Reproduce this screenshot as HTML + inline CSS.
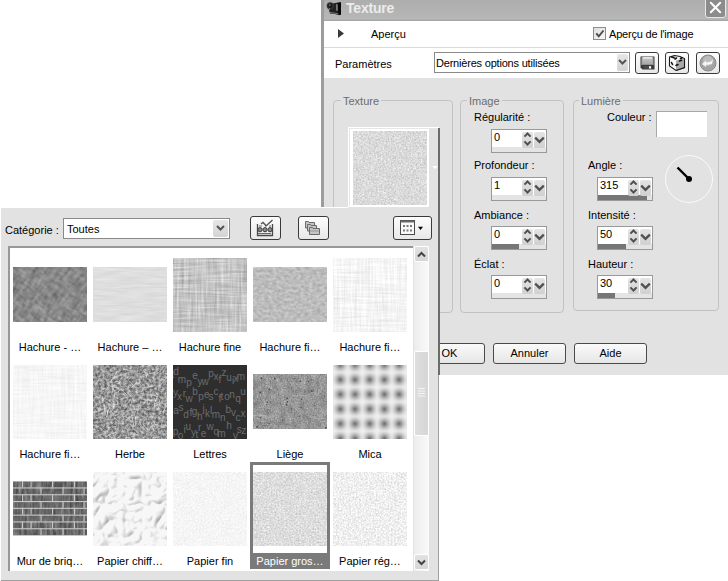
<!DOCTYPE html>
<html><head><meta charset="utf-8">
<style>
*{margin:0;padding:0;box-sizing:border-box}
html,body{width:728px;height:581px;overflow:hidden;background:#fff;font-family:"Liberation Sans",sans-serif;font-size:11px;color:#000}
.a{position:absolute}
svg.a{overflow:visible}
.t{position:absolute;white-space:nowrap;line-height:13px;font-size:11px}
.grp{position:absolute;border:1px solid #c2c2c2;border-radius:4px}
.gl{position:absolute;background:#e2e2e2;color:#6c6c6c;padding:0 2px;line-height:13px;white-space:nowrap}
.spin{position:absolute;width:56px;height:24px;border:1px solid #999;background:#fff}
.spin .trk{position:absolute;left:0;right:0;bottom:0;height:5px;background:#e4e4e4}
.spin .fill{position:absolute;left:0;bottom:0;height:5px;background:#767676}
.spin .v{position:absolute;left:2px;top:1px;line-height:13px;font-size:11px}
.sb{position:absolute;top:2px;width:11px;height:16px;background:linear-gradient(#e4e4e4,#d0d0d0);border-radius:2px}
.btn{position:absolute;border:1px solid #3a3a3a;border-radius:3px;background:linear-gradient(#fdfdfd,#e8e8e8)}
.pbtn{position:absolute;width:73px;height:21px;border:1px solid #4a4a4a;border-radius:3px;background:linear-gradient(#fafafa,#e6e6e6);text-align:center;line-height:19px}
.lb{position:absolute;width:80px;text-align:center;white-space:nowrap;line-height:13px}
.th{position:absolute;display:block}
</style></head><body>
<svg width="0" height="0" style="position:absolute">
<defs>
 <filter id="fPrev" x="0" y="0" width="1" height="1" color-interpolation-filters="sRGB">
  <feTurbulence type="fractalNoise" baseFrequency="0.6" numOctaves="2" seed="4" result="a"/><feTurbulence type="fractalNoise" baseFrequency="0.12" numOctaves="2" seed="44" result="b"/><feComposite in="a" in2="b" operator="arithmetic" k2="0.85" k3="0.15"/>
  <feColorMatrix type="matrix" values="0.341 0 0 0 0.684  0.341 0 0 0 0.684  0.341 0 0 0 0.684  0 0 0 0 1"/>
 </filter>
 <filter id="fH1" x="0" y="0" width="1" height="1" color-interpolation-filters="sRGB">
  <feTurbulence type="fractalNoise" baseFrequency="0.1 0.3" numOctaves="2" seed="7" result="a"/>
  <feTurbulence type="fractalNoise" baseFrequency="0.3 0.1" numOctaves="2" seed="9" result="b"/>
  <feComposite in="a" in2="b" operator="arithmetic" k2="0.5" k3="0.5"/>
  <feColorMatrix type="matrix" values="0.488 0 0 0 0.289  0.488 0 0 0 0.289  0.488 0 0 0 0.289  0 0 0 0 1"/>
 </filter>
 <filter id="fH2" x="0" y="0" width="1" height="1" color-interpolation-filters="sRGB">
  <feTurbulence type="fractalNoise" baseFrequency="0.04 0.5" numOctaves="2" seed="3"/>
  <feColorMatrix type="matrix" values="0.103 0 0 0 0.819  0.103 0 0 0 0.819  0.103 0 0 0 0.819  0 0 0 0 1"/>
 </filter>
 <filter id="fHF" x="0" y="0" width="1" height="1" color-interpolation-filters="sRGB">
  <feTurbulence type="fractalNoise" baseFrequency="0.03 0.45" numOctaves="2" seed="11" result="a"/>
  <feTurbulence type="fractalNoise" baseFrequency="0.45 0.03" numOctaves="2" seed="12" result="b"/>
  <feComposite in="a" in2="b" operator="arithmetic" k2="0.5" k3="0.5"/>
  <feColorMatrix type="matrix" values="0.488 0 0 0 0.525  0.488 0 0 0 0.525  0.488 0 0 0 0.525  0 0 0 0 1"/>
 </filter>
 <filter id="fH4" x="0" y="0" width="1" height="1" color-interpolation-filters="sRGB">
  <feTurbulence type="fractalNoise" baseFrequency="0.25 0.35" numOctaves="2" seed="5"/>
  <feColorMatrix type="matrix" values="0.241 0 0 0 0.617  0.241 0 0 0 0.617  0.241 0 0 0 0.617  0 0 0 0 1"/>
 </filter>
 <filter id="fH5" x="0" y="0" width="1" height="1" color-interpolation-filters="sRGB">
  <feTurbulence type="fractalNoise" baseFrequency="0.03 0.45" numOctaves="2" seed="21" result="a"/>
  <feTurbulence type="fractalNoise" baseFrequency="0.45 0.03" numOctaves="2" seed="22" result="b"/>
  <feComposite in="a" in2="b" operator="arithmetic" k2="0.5" k3="0.5"/>
  <feColorMatrix type="matrix" values="0.244 0 0 0 0.835  0.244 0 0 0 0.835  0.244 0 0 0 0.835  0 0 0 0 1"/>
 </filter>
 <filter id="fH6" x="0" y="0" width="1" height="1" color-interpolation-filters="sRGB">
  <feTurbulence type="fractalNoise" baseFrequency="0.03 0.45" numOctaves="2" seed="31" result="a"/>
  <feTurbulence type="fractalNoise" baseFrequency="0.45 0.03" numOctaves="2" seed="32" result="b"/>
  <feComposite in="a" in2="b" operator="arithmetic" k2="0.5" k3="0.5"/>
  <feColorMatrix type="matrix" values="0.146 0 0 0 0.892  0.146 0 0 0 0.892  0.146 0 0 0 0.892  0 0 0 0 1"/>
 </filter>
 <filter id="fHerbe" x="0" y="0" width="1" height="1" color-interpolation-filters="sRGB">
  <feTurbulence type="fractalNoise" baseFrequency="0.35" numOctaves="3" seed="8"/>
  <feColorMatrix type="matrix" values="0.759 0 0 0 0.201  0.759 0 0 0 0.201  0.759 0 0 0 0.201  0 0 0 0 1"/>
 </filter>
 <filter id="fLiege" x="0" y="0" width="1" height="1" color-interpolation-filters="sRGB">
  <feTurbulence type="fractalNoise" baseFrequency="0.7" numOctaves="2" seed="13" result="a"/><feTurbulence type="fractalNoise" baseFrequency="0.15" numOctaves="2" seed="53" result="b"/><feComposite in="a" in2="b" operator="arithmetic" k2="0.6" k3="0.4"/>
  <feColorMatrix type="matrix" values="0.537 0 0 0 0.320  0.537 0 0 0 0.320  0.537 0 0 0 0.320  0 0 0 0 1"/>
 </filter>
 <filter id="fPfin" x="0" y="0" width="1" height="1" color-interpolation-filters="sRGB">
  <feTurbulence type="fractalNoise" baseFrequency="0.6" numOctaves="2" seed="14" result="a"/><feTurbulence type="fractalNoise" baseFrequency="0.12" numOctaves="2" seed="54" result="b"/><feComposite in="a" in2="b" operator="arithmetic" k2="0.85" k3="0.15"/>
  <feColorMatrix type="matrix" values="0.156 0 0 0 0.883  0.156 0 0 0 0.883  0.156 0 0 0 0.883  0 0 0 0 1"/>
 </filter>
 <filter id="fPgros" x="0" y="0" width="1" height="1" color-interpolation-filters="sRGB">
  <feTurbulence type="fractalNoise" baseFrequency="0.6" numOctaves="2" seed="15" result="a"/><feTurbulence type="fractalNoise" baseFrequency="0.12" numOctaves="2" seed="55" result="b"/><feComposite in="a" in2="b" operator="arithmetic" k2="0.85" k3="0.15"/>
  <feColorMatrix type="matrix" values="0.341 0 0 0 0.696  0.341 0 0 0 0.696  0.341 0 0 0 0.696  0 0 0 0 1"/>
 </filter>
 <filter id="fPreg" x="0" y="0" width="1" height="1" color-interpolation-filters="sRGB">
  <feTurbulence type="fractalNoise" baseFrequency="0.6" numOctaves="2" seed="16" result="a"/><feTurbulence type="fractalNoise" baseFrequency="0.12" numOctaves="2" seed="56" result="b"/><feComposite in="a" in2="b" operator="arithmetic" k2="0.85" k3="0.15"/>
  <feColorMatrix type="matrix" values="0.341 0 0 0 0.767  0.341 0 0 0 0.767  0.341 0 0 0 0.767  0 0 0 0 1"/>
 </filter>
 <filter id="fBrick" x="0" y="0" width="1" height="1" color-interpolation-filters="sRGB">
  <feTurbulence type="fractalNoise" baseFrequency="0.35 0.08" numOctaves="2" seed="17"/>
  <feColorMatrix type="matrix" values="0.414 0 0 0 0.201  0.414 0 0 0 0.201  0.414 0 0 0 0.201  0 0 0 0 1"/>
 </filter>
 <radialGradient id="gMica">
  <stop offset="0" stop-color="#5a5a5a"/><stop offset="0.5" stop-color="#a4a4a4"/><stop offset="1" stop-color="#eeeeee"/>
 </radialGradient>
 <pattern id="pMica" x="-0.35" y="-7.35" width="14.7" height="14.7" patternUnits="userSpaceOnUse">
  <rect width="14.7" height="14.7" fill="#eeeeee"/>
  <circle cx="7.35" cy="7.35" r="7.35" fill="url(#gMica)"/>
 </pattern>
</defs>
</svg>

<!-- ============ DIALOG ============ -->
<div class="a" style="left:321px;top:0;width:407px;height:375px;background:#e2e2e2"></div>
<div class="a" style="left:321px;top:0;width:3px;height:375px;background:#9c9c9c"></div>
<div class="a" style="left:324px;top:0;width:404px;height:21px;background:linear-gradient(#adadad,#b7b7b7 92%,#a5a5a5 95%,#a5a5a5)"></div>
<svg class="a" style="left:326px;top:1px" width="16" height="15" viewBox="0 0 16 15">
 <path d="M2 4L9 2L15 1.2L15 13.5L13 14.2L9 13L4 12.5L3 9Z" fill="#222"/>
 <path d="M11 2L15 1.2L15 13.5L12.5 14Z" fill="#080808"/>
 <circle cx="4.3" cy="4.8" r="3.6" fill="#333"/><circle cx="4.3" cy="4.8" r="2.2" fill="#1a1a1a"/><circle cx="3.8" cy="4.2" r="0.9" fill="#6a6a6a"/>
 <rect x="10.3" y="3.2" width="1.3" height="6.5" fill="#a0a0a0"/>
 <path d="M4 11.5L9 12.2L12.5 13" stroke="#7a7a7a" stroke-width="0.9" fill="none"/>
 <path d="M2.5 8.5L4 7.5" stroke="#bbb" stroke-width="0.8"/>
</svg>
<div class="t" style="left:346px;top:1px;font-size:14px;font-weight:bold;color:#ebebeb;line-height:15px;letter-spacing:-0.2px">Texture</div>
<div class="a" style="left:705px;top:-3px;width:21px;height:21px;border:1px solid #e8e8e8;border-radius:3px;background:#8c8c8c"></div>
<svg class="a" style="left:709px;top:1px" width="13" height="13" viewBox="0 0 13 13"><path d="M1.8 1.8L11.2 11.2M11.2 1.8L1.8 11.2" stroke="#fff" stroke-width="2" stroke-linecap="round"/></svg>
<div class="a" style="left:726px;top:0;width:1px;height:19px;background:#bcbcbc"></div>

<div class="a" style="left:324px;top:21px;width:404px;height:57px;background:#fff"></div>
<div class="a" style="left:324px;top:47px;width:404px;height:1px;background:#dadada"></div>
<svg class="a" style="left:338px;top:29px" width="6" height="10"><path d="M0 0L6 4.5L0 9Z" fill="#3a3a3a"/></svg>
<div class="t" style="left:371px;top:27.5px">Aperçu</div>
<div class="a" style="left:593px;top:27px;width:13px;height:13px;border:1px solid #8c8c8c;background:linear-gradient(135deg,#dedede,#f8f8f8)"></div>
<svg class="a" style="left:595px;top:29px" width="10" height="10"><path d="M1.3 4.3L3.8 7.3L8.5 1.5" fill="none" stroke="#4a4a4a" stroke-width="1.9"/></svg>
<div class="t" style="left:609px;top:27.5px;letter-spacing:-0.2px">Aperçu de l'image</div>

<div class="t" style="left:335px;top:57.5px">Paramètres</div>
<div class="a" style="left:434px;top:52px;width:196px;height:21px;border:1px solid #8a8a8a;background:#fff"></div>
<div class="t" style="left:436px;top:57px;letter-spacing:-0.2px">Dernières options utilisées</div>
<div class="a" style="left:617px;top:54px;width:11px;height:17px;background:linear-gradient(#e6e6e6,#d4d4d4);border-radius:2px"></div>
<svg class="a" style="left:618px;top:59px" width="9" height="7"><path d="M1 1L4.5 4.5L8 1" fill="none" stroke="#555" stroke-width="2"/></svg>
<div class="btn" style="left:635px;top:52px;width:24px;height:22px"></div>
<svg class="a" style="left:640px;top:56px" width="15" height="14" viewBox="0 0 15 14">
 <defs><linearGradient id="gFl" x1="0" y1="0" x2="0" y2="1"><stop offset="0" stop-color="#c8c8c8"/><stop offset="1" stop-color="#a4a4a4"/></linearGradient></defs>
 <path d="M0.5 0.5H14.5V13.5H2.5L0.5 11.5Z" fill="#383838"/>
 <rect x="2" y="1.2" width="11" height="7.6" fill="url(#gFl)"/>
 <rect x="3" y="1.2" width="9" height="1.3" fill="#f6f6f6"/>
 <rect x="1.4" y="1.2" width="0.8" height="8" fill="#9a9a9a"/><rect x="12.8" y="1.2" width="0.8" height="8" fill="#9a9a9a"/>
 <rect x="3.5" y="9.8" width="8.5" height="3" fill="#4a4a4a"/>
 <rect x="9" y="10.2" width="2" height="2.3" fill="#fff"/>
</svg>
<div class="btn" style="left:665px;top:52px;width:24px;height:22px"></div>
<svg class="a" style="left:668px;top:54px" width="18" height="18" viewBox="0 0 18 18">
 <path d="M1.5 3L6.5 1.5L12 2.5L16.5 4.5L16.5 13.5L8 16.5L1.5 12Z" fill="#f8f8f8" stroke="#1a1a1a" stroke-width="1.1"/>
 <path d="M8 6.5L16.5 4.5L16.5 13.5L8 16.5Z" fill="#a8a8a8"/>
 <path d="M8 16.5L16.5 13.5L16.5 4.5" fill="none" stroke="#1a1a1a" stroke-width="1.1"/>
 <path d="M3.5 3L6 3.6M7 5L8.5 4M12.5 4.5L14.2 3.8M11.5 7L13.5 6.3M8 11.5L10 10.5M3.5 8.5L4.5 10.5" stroke="#111" stroke-width="1.6" stroke-linecap="round"/>
</svg>
<div class="btn" style="left:696px;top:52px;width:24px;height:22px"></div>
<svg class="a" style="left:699px;top:54px" width="18" height="18" viewBox="0 0 18 18">
 <circle cx="9" cy="9" r="8" fill="#a4a4a4" stroke="#8a8a8a" stroke-width="1"/>
 <circle cx="9" cy="7" r="5" fill="#bcbcbc"/>
 <path d="M3 10L7 6.5L7 8.5L12 7.5L14 5L13 10L7 11L7 13Z" fill="#f6f6f6"/>
</svg>

<div class="grp" style="left:333px;top:100px;width:120px;height:213px"></div>
<div class="gl" style="left:341px;top:95px">Texture</div>
<div class="grp" style="left:460px;top:100px;width:104px;height:213px"></div>
<div class="gl" style="left:467px;top:95px">Image</div>
<div class="grp" style="left:573px;top:100px;width:146px;height:211px"></div>
<div class="gl" style="left:579px;top:95px">Lumière</div>

<div class="a" style="left:348px;top:127px;width:81px;height:80px;background:#fff"></div>
<div class="a" style="left:348px;top:127px;width:91px;height:2px;background:#fff"></div>
<div class="a" style="left:349px;top:128px;width:89px;height:1px;background:#e6e6e6"></div><div class="a" style="left:349px;top:128px;width:1px;height:78px;background:#e6e6e6"></div>
<svg class="th" style="left:353px;top:131px" width="74" height="74"><rect width="74" height="74" filter="url(#fPrev)"/></svg>
<svg class="a" style="left:432px;top:166px" width="6" height="4"><path d="M0 0H6L3 3Z" fill="#fff"/></svg>

<div class="t" style="left:474px;top:111px">Régularité :</div>
<div class="spin" style="left:491px;top:129px"><div class="trk"></div><div class="v">0</div><div class="sb" style="left:30px"></div><div class="sb" style="left:42px"></div><svg class="a" style="left:0;top:0" width="54" height="22"><path d="M32.4 6.6L35.5 3.5L38.6 6.6M32.4 11.4L35.5 14.5L38.6 11.4" fill="none" stroke="#505050" stroke-width="2"/><path d="M43.2 7.6L47.5 11.9L51.8 7.6" fill="none" stroke="#505050" stroke-width="2.3"/></svg></div>
<div class="t" style="left:474px;top:158.5px">Profondeur :</div>
<div class="spin" style="left:491px;top:177px"><div class="trk"></div><div class="v">1</div><div class="sb" style="left:30px"></div><div class="sb" style="left:42px"></div><svg class="a" style="left:0;top:0" width="54" height="22"><path d="M32.4 6.6L35.5 3.5L38.6 6.6M32.4 11.4L35.5 14.5L38.6 11.4" fill="none" stroke="#505050" stroke-width="2"/><path d="M43.2 7.6L47.5 11.9L51.8 7.6" fill="none" stroke="#505050" stroke-width="2.3"/></svg></div>
<div class="t" style="left:474px;top:208.5px">Ambiance :</div>
<div class="spin" style="left:491px;top:226px"><div class="trk"></div><div class="fill" style="width:27px"></div><div class="v">0</div><div class="sb" style="left:30px"></div><div class="sb" style="left:42px"></div><svg class="a" style="left:0;top:0" width="54" height="22"><path d="M32.4 6.6L35.5 3.5L38.6 6.6M32.4 11.4L35.5 14.5L38.6 11.4" fill="none" stroke="#505050" stroke-width="2"/><path d="M43.2 7.6L47.5 11.9L51.8 7.6" fill="none" stroke="#505050" stroke-width="2.3"/></svg></div>
<div class="t" style="left:474px;top:257.5px">Éclat :</div>
<div class="spin" style="left:491px;top:275px"><div class="trk"></div><div class="v">0</div><div class="sb" style="left:30px"></div><div class="sb" style="left:42px"></div><svg class="a" style="left:0;top:0" width="54" height="22"><path d="M32.4 6.6L35.5 3.5L38.6 6.6M32.4 11.4L35.5 14.5L38.6 11.4" fill="none" stroke="#505050" stroke-width="2"/><path d="M43.2 7.6L47.5 11.9L51.8 7.6" fill="none" stroke="#505050" stroke-width="2.3"/></svg></div>

<div class="t" style="left:607px;top:111px">Couleur :</div>
<div class="a" style="left:656px;top:111px;width:51px;height:26px;background:#fff;border-top:1px solid #a8a8a8;border-left:1px solid #a8a8a8"></div>
<div class="t" style="left:588px;top:158.5px">Angle :</div>
<div class="spin" style="left:597px;top:177px"><div class="trk"></div><div class="fill" style="width:49px"></div><div class="v">315</div><div class="sb" style="left:30px"></div><div class="sb" style="left:42px"></div><svg class="a" style="left:0;top:0" width="54" height="22"><path d="M32.4 6.6L35.5 3.5L38.6 6.6M32.4 11.4L35.5 14.5L38.6 11.4" fill="none" stroke="#505050" stroke-width="2"/><path d="M43.2 7.6L47.5 11.9L51.8 7.6" fill="none" stroke="#505050" stroke-width="2.3"/></svg></div>
<div class="t" style="left:588px;top:208.5px">Intensité :</div>
<div class="spin" style="left:597px;top:226px"><div class="trk"></div><div class="fill" style="width:28px"></div><div class="v">50</div><div class="sb" style="left:30px"></div><div class="sb" style="left:42px"></div><svg class="a" style="left:0;top:0" width="54" height="22"><path d="M32.4 6.6L35.5 3.5L38.6 6.6M32.4 11.4L35.5 14.5L38.6 11.4" fill="none" stroke="#505050" stroke-width="2"/><path d="M43.2 7.6L47.5 11.9L51.8 7.6" fill="none" stroke="#505050" stroke-width="2.3"/></svg></div>
<div class="t" style="left:588px;top:257.5px">Hauteur :</div>
<div class="spin" style="left:597px;top:275px"><div class="trk"></div><div class="fill" style="width:17px"></div><div class="v">30</div><div class="sb" style="left:30px"></div><div class="sb" style="left:42px"></div><svg class="a" style="left:0;top:0" width="54" height="22"><path d="M32.4 6.6L35.5 3.5L38.6 6.6M32.4 11.4L35.5 14.5L38.6 11.4" fill="none" stroke="#505050" stroke-width="2"/><path d="M43.2 7.6L47.5 11.9L51.8 7.6" fill="none" stroke="#505050" stroke-width="2.3"/></svg></div>
<svg class="a" style="left:664px;top:154px" width="50" height="50"><circle cx="25" cy="25" r="23.5" fill="none" stroke="#fafafa" stroke-width="1"/><path d="M13.5 13.5L25 25" stroke="#000" stroke-width="2.4"/><circle cx="25" cy="25" r="3" fill="#000"/></svg>

<div class="pbtn" style="left:412px;top:343px;padding-left:2px">OK</div>
<div class="pbtn" style="left:493px;top:343px">Annuler</div>
<div class="pbtn" style="left:574px;top:343px">Aide</div>

<!-- ============ PICKER ============ -->
<div class="a" style="left:1px;top:207px;width:438px;height:374px;background:#e2e2e2;border-right:1px solid #a0a0a0;border-bottom:1px solid #a0a0a0"></div>
<div class="a" style="left:1px;top:207px;width:347px;height:1px;background:#fff"></div>
<div class="a" style="left:438px;top:128px;width:2px;height:247px;background:#6c6c6c"></div>
<div class="t" style="left:5px;top:223.5px">Catégorie :</div>
<div class="a" style="left:63px;top:218px;width:167px;height:21px;border:1px solid #8a8a8a;background:#fff"></div>
<div class="t" style="left:67px;top:223px">Toutes</div>
<div class="a" style="left:213px;top:220px;width:15px;height:17px;background:linear-gradient(#e6e6e6,#d4d4d4);border-radius:2px"></div>
<svg class="a" style="left:216px;top:225px" width="9" height="7"><path d="M1 1L4.5 4.5L8 1" fill="none" stroke="#555" stroke-width="2"/></svg>
<div class="btn" style="left:250px;top:216px;width:31px;height:24px"></div>
<svg class="a" style="left:256px;top:219px" width="18" height="18" viewBox="0 0 18 18">
 <path d="M1.5 5V16.5H16.5V5" fill="none" stroke="#4a4a4a" stroke-width="1.3"/>
 <path d="M3 7H6M13 7H15" stroke="#6a6a6a" stroke-width="1"/>
 <path d="M2 14.5H15" stroke="#6a6a6a" stroke-width="1"/>
 <circle cx="4" cy="10.7" r="2.1" fill="#8a8a8a" stroke="#3a3a3a" stroke-width="1"/>
 <circle cx="9" cy="10.7" r="2.1" fill="#8a8a8a" stroke="#3a3a3a" stroke-width="1"/>
 <circle cx="14" cy="10.7" r="2.1" fill="#8a8a8a" stroke="#3a3a3a" stroke-width="1"/>
 <path d="M5 5L7 3.5L9 5.5L10 7L16.5 1" fill="none" stroke="#555" stroke-width="1.4"/>
</svg>
<div class="btn" style="left:298px;top:216px;width:31px;height:24px"></div>
<svg class="a" style="left:304px;top:219px" width="18" height="18" viewBox="0 0 18 18">
 <g fill="#c4c4c4" stroke="#6a6a6a" stroke-width="1">
 <path d="M1.5 2.5H4.5L5 3.5H10.5V9H1.5Z"/>
 <path d="M3.5 5.5H6.5L7 6.5H12.5V12H3.5Z"/>
 <path d="M5.5 8.5H8.5L9 9.5H15.5V15.5H5.5Z"/>
 </g>
 <path d="M6 12H15" stroke="#999" stroke-width="1"/>
</svg>
<div class="btn" style="left:393px;top:216px;width:39px;height:24px"></div>
<svg class="a" style="left:400px;top:220px" width="24" height="16" viewBox="0 0 24 16">
 <rect x="0.5" y="0.5" width="14" height="14" fill="#fafafa" stroke="#4a4a4a" stroke-width="1"/>
 <rect x="0.5" y="0.5" width="14" height="2" fill="#6a6a6a"/>
 <g fill="#7a7a7a"><rect x="3" y="5" width="2" height="2"/><rect x="6.5" y="5" width="2" height="2"/><rect x="10" y="5" width="2" height="2"/><rect x="3" y="9.5" width="2" height="2"/><rect x="6.5" y="9.5" width="2" height="2"/><rect x="10" y="9.5" width="2" height="2"/></g>
 <path d="M18 6.8H23L20.5 10Z" fill="#000"/>
</svg>

<div class="a" style="left:8px;top:246px;width:405px;height:325px;background:#fff;border-top:2px solid #989898;border-left:2px solid #989898"></div>
<div class="a" style="left:414px;top:246px;width:15px;height:325px;background:linear-gradient(90deg,#ececec,#fafafa)"></div>
<div class="a" style="left:414px;top:246px;width:15px;height:16px;background:linear-gradient(#e2e2e2,#d6d6d6);border:1px solid #fff;border-radius:2px"></div>
<svg class="a" style="left:417px;top:251px" width="9" height="7"><path d="M1 5.5L4.5 2L8 5.5" fill="none" stroke="#444" stroke-width="2"/></svg>
<div class="a" style="left:414px;top:351px;width:15px;height:85px;background:linear-gradient(90deg,#dedede,#d6d6d6);border:1px solid #fff;border-radius:2px"></div>
<svg class="a" style="left:418px;top:388px" width="7" height="9"><path d="M0 0.5H7M0 3H7M0 5.5H7M0 8H7" stroke="#f4f4f4" stroke-width="1"/></svg>
<div class="a" style="left:414px;top:554px;width:15px;height:16px;background:linear-gradient(#e2e2e2,#d6d6d6);border:1px solid #fff;border-radius:2px"></div>
<svg class="a" style="left:417px;top:559px" width="9" height="7"><path d="M1 1.5L4.5 5L8 1.5" fill="none" stroke="#444" stroke-width="2"/></svg>

<!-- row1 -->
<svg class="th" style="left:13px;top:267px" width="74" height="55"><g transform="rotate(35 37 27)"><rect x="-30" y="-30" width="134" height="115" filter="url(#fH1)"/></g></svg>
<svg class="th" style="left:93px;top:267px" width="74" height="55"><rect width="74" height="55" filter="url(#fH2)"/></svg>
<svg class="th" style="left:173px;top:258px" width="74" height="74"><rect width="74" height="74" filter="url(#fHF)"/></svg>
<svg class="th" style="left:253px;top:267px" width="74" height="55"><rect width="74" height="55" filter="url(#fH4)"/></svg>
<svg class="th" style="left:333px;top:258px" width="74" height="74"><rect width="74" height="74" filter="url(#fH5)"/></svg>
<div class="lb" style="left:10px;top:341px">Hachure - …</div>
<div class="lb" style="left:90px;top:341px">Hachure – …</div>
<div class="lb" style="left:170px;top:341px">Hachure fine</div>
<div class="lb" style="left:250px;top:341px">Hachure fi…</div>
<div class="lb" style="left:330px;top:341px">Hachure fi…</div>
<!-- row2 -->
<svg class="th" style="left:13px;top:365px" width="74" height="74"><rect width="74" height="74" filter="url(#fH6)"/></svg>
<svg class="th" style="left:93px;top:365px" width="74" height="74"><rect width="74" height="74" filter="url(#fHerbe)"/><g fill="none" stroke-width="0.9" opacity="0.7"><path d="M46.1 54.9Q42.6 60.3 42.9 66.0" stroke="#606060"/><path d="M69.8 48.0Q69.3 49.0 65.8 50.9" stroke="#505050"/><path d="M7.5 18.5Q9.6 23.1 8.4 25.7" stroke="#c8c8c8"/><path d="M11.8 59.0Q7.5 57.5 6.1 52.1" stroke="#c8c8c8"/><path d="M0.4 57.2Q-3.0 59.8 -4.8 58.6" stroke="#c8c8c8"/><path d="M39.9 50.2Q40.2 46.2 36.7 39.1" stroke="#c8c8c8"/><path d="M22.1 26.7Q20.1 25.8 19.5 22.3" stroke="#d8d8d8"/><path d="M43.4 44.1Q45.2 46.2 44.6 48.5" stroke="#e6e6e6"/><path d="M23.4 35.6Q25.8 37.2 24.6 39.9" stroke="#d8d8d8"/><path d="M29.9 40.6Q32.8 39.8 36.0 37.2" stroke="#d8d8d8"/><path d="M46.2 70.6Q43.3 68.0 41.8 66.6" stroke="#505050"/><path d="M38.8 57.4Q36.4 52.4 31.1 51.1" stroke="#e6e6e6"/><path d="M70.0 6.7Q71.7 4.7 74.8 -0.7" stroke="#c8c8c8"/><path d="M40.3 23.1Q42.0 21.5 42.5 18.2" stroke="#d8d8d8"/><path d="M22.9 35.8Q23.5 37.7 23.8 40.4" stroke="#606060"/><path d="M17.6 44.0Q14.4 49.3 14.0 50.7" stroke="#505050"/><path d="M47.2 59.3Q50.5 57.4 50.1 54.4" stroke="#606060"/><path d="M58.3 7.9Q59.9 6.7 63.1 5.8" stroke="#505050"/><path d="M73.9 63.1Q70.9 62.9 66.4 64.2" stroke="#505050"/><path d="M20.3 34.8Q20.1 36.7 16.3 37.6" stroke="#606060"/><path d="M36.9 25.0Q35.8 22.9 31.7 21.8" stroke="#606060"/><path d="M58.2 57.3Q59.2 62.5 61.3 66.1" stroke="#e6e6e6"/><path d="M20.8 35.9Q22.0 40.0 19.6 45.4" stroke="#e6e6e6"/><path d="M13.2 63.0Q18.9 62.1 23.3 61.4" stroke="#e6e6e6"/><path d="M60.4 47.9Q60.4 52.5 58.4 54.4" stroke="#e6e6e6"/><path d="M25.9 62.4Q24.5 65.9 19.4 69.3" stroke="#e6e6e6"/><path d="M39.2 12.3Q35.3 15.5 33.2 22.1" stroke="#505050"/><path d="M49.6 30.8Q54.6 34.4 58.2 38.5" stroke="#606060"/><path d="M46.2 57.3Q48.1 61.4 52.5 64.7" stroke="#d8d8d8"/><path d="M46.2 13.4Q48.0 18.0 45.9 18.8" stroke="#d8d8d8"/><path d="M12.3 66.0Q6.5 60.4 3.3 58.5" stroke="#505050"/><path d="M34.4 28.1Q38.6 30.5 41.1 33.8" stroke="#c8c8c8"/><path d="M25.9 70.5Q22.1 72.9 19.2 79.1" stroke="#606060"/><path d="M45.4 7.0Q47.8 7.4 51.8 8.9" stroke="#606060"/><path d="M9.6 30.3Q11.9 32.3 17.2 33.5" stroke="#505050"/><path d="M41.7 70.8Q38.7 72.4 33.0 72.6" stroke="#e6e6e6"/><path d="M28.3 24.1Q25.2 27.8 21.1 28.3" stroke="#e6e6e6"/><path d="M27.8 31.9Q26.9 30.2 26.9 25.7" stroke="#505050"/><path d="M11.8 44.0Q11.6 46.4 12.1 50.3" stroke="#e6e6e6"/><path d="M72.8 36.4Q74.4 34.4 74.6 28.8" stroke="#d8d8d8"/><path d="M18.2 3.0Q16.0 -0.6 13.5 -2.4" stroke="#505050"/><path d="M69.2 57.9Q70.0 53.9 69.0 51.7" stroke="#c8c8c8"/><path d="M36.4 73.4Q39.9 72.6 47.3 74.7" stroke="#d8d8d8"/><path d="M20.9 52.4Q24.5 55.1 28.3 58.8" stroke="#d8d8d8"/><path d="M55.1 43.7Q52.9 41.5 49.3 42.4" stroke="#505050"/><path d="M50.9 14.1Q55.9 12.7 60.3 9.7" stroke="#606060"/><path d="M46.8 35.7Q44.5 38.4 40.8 39.4" stroke="#505050"/><path d="M66.5 34.4Q67.1 37.4 66.2 40.8" stroke="#d8d8d8"/><path d="M21.2 57.8Q19.8 60.7 16.8 60.5" stroke="#505050"/><path d="M72.0 39.8Q74.0 36.8 79.4 36.1" stroke="#d8d8d8"/><path d="M60.6 58.6Q63.7 62.4 62.8 62.2" stroke="#505050"/><path d="M51.9 3.6Q51.2 4.6 48.7 8.4" stroke="#d8d8d8"/><path d="M21.6 67.9Q20.2 62.6 16.4 60.8" stroke="#505050"/><path d="M15.8 41.1Q16.7 45.6 21.1 49.5" stroke="#e6e6e6"/><path d="M54.9 65.0Q53.2 62.2 50.0 59.4" stroke="#e6e6e6"/><path d="M26.2 48.6Q22.6 50.4 21.8 51.2" stroke="#e6e6e6"/><path d="M37.4 67.4Q39.9 67.8 45.9 70.4" stroke="#e6e6e6"/><path d="M61.6 21.0Q56.3 21.3 51.3 22.6" stroke="#e6e6e6"/><path d="M9.7 1.4Q10.4 -3.7 14.4 -5.8" stroke="#d8d8d8"/><path d="M44.0 17.7Q39.6 20.5 38.3 23.1" stroke="#e6e6e6"/><path d="M40.1 28.5Q37.5 32.1 33.4 37.9" stroke="#505050"/><path d="M8.6 72.0Q12.1 76.0 14.0 81.1" stroke="#c8c8c8"/><path d="M61.9 21.4Q57.0 24.4 53.1 25.5" stroke="#505050"/><path d="M26.5 21.9Q30.6 26.6 34.4 30.5" stroke="#e6e6e6"/><path d="M42.4 54.8Q43.1 52.1 46.2 51.9" stroke="#d8d8d8"/><path d="M36.3 69.3Q37.9 73.8 39.9 75.1" stroke="#505050"/><path d="M45.8 31.7Q48.8 29.5 50.5 30.7" stroke="#c8c8c8"/><path d="M64.3 64.3Q67.6 62.1 72.6 62.7" stroke="#d8d8d8"/><path d="M21.2 17.4Q22.6 15.4 25.5 16.9" stroke="#e6e6e6"/><path d="M1.6 33.8Q-0.8 36.6 -1.4 38.1" stroke="#e6e6e6"/><path d="M15.6 29.2Q10.5 32.0 9.0 37.7" stroke="#e0e0e0"/><path d="M32.7 0.7Q35.8 3.1 42.3 8.7" stroke="#d0d0d0"/><path d="M43.1 18.0Q45.0 20.8 49.8 22.9" stroke="#d0d0d0"/><path d="M61.6 10.0Q67.2 7.8 69.6 3.1" stroke="#d0d0d0"/><path d="M18.5 14.0Q19.7 20.3 19.4 27.5" stroke="#e0e0e0"/><path d="M35.7 5.8Q34.7 3.9 30.0 4.1" stroke="#f0f0f0"/><path d="M52.1 19.0Q49.9 25.4 47.5 28.3" stroke="#d0d0d0"/><path d="M72.3 9.4Q78.2 7.8 83.1 7.9" stroke="#f0f0f0"/><path d="M67.9 15.1Q63.2 12.9 60.5 14.3" stroke="#d0d0d0"/><path d="M20.9 39.3Q19.6 41.7 15.1 40.3" stroke="#e0e0e0"/><path d="M48.6 51.2Q53.0 52.6 54.0 54.3" stroke="#e0e0e0"/><path d="M26.5 23.1Q21.3 22.9 16.3 20.9" stroke="#e0e0e0"/><path d="M23.6 74.0Q17.4 73.4 14.8 69.4" stroke="#f0f0f0"/><path d="M54.5 9.6Q51.4 12.1 46.7 11.4" stroke="#e0e0e0"/><path d="M64.5 30.9Q60.9 37.7 61.2 43.2" stroke="#f0f0f0"/><path d="M28.1 0.9Q27.4 1.2 22.8 -1.6" stroke="#e0e0e0"/><path d="M53.9 28.7Q54.2 34.0 54.8 38.9" stroke="#d0d0d0"/><path d="M38.4 38.1Q38.4 36.2 40.5 32.7" stroke="#e0e0e0"/><path d="M36.8 45.5Q33.1 45.8 30.4 49.0" stroke="#e0e0e0"/><path d="M45.3 38.4Q45.2 41.4 45.1 46.4" stroke="#d0d0d0"/><path d="M30.0 18.5Q35.5 22.6 38.1 27.7" stroke="#e0e0e0"/><path d="M43.1 23.4Q40.9 21.6 36.9 16.3" stroke="#e0e0e0"/><path d="M20.5 12.5Q25.4 10.9 27.6 10.2" stroke="#e0e0e0"/><path d="M38.5 49.7Q39.6 54.2 41.1 62.0" stroke="#f0f0f0"/><path d="M2.3 64.6Q-3.7 63.7 -8.7 61.7" stroke="#f0f0f0"/><path d="M41.7 47.4Q43.5 44.1 47.3 43.7" stroke="#d0d0d0"/><path d="M3.5 46.6Q9.1 44.3 13.5 43.0" stroke="#f0f0f0"/><path d="M5.8 14.7Q2.2 17.8 2.5 21.2" stroke="#f0f0f0"/><path d="M52.8 13.3Q55.2 9.2 54.0 5.2" stroke="#f0f0f0"/><path d="M73.8 11.8Q68.8 18.1 67.2 21.0" stroke="#e0e0e0"/><path d="M53.5 9.6Q58.1 8.4 63.6 6.6" stroke="#e0e0e0"/><path d="M65.1 59.0Q62.7 58.9 56.5 62.1" stroke="#f0f0f0"/><path d="M64.1 59.1Q63.0 62.4 58.7 61.9" stroke="#e0e0e0"/><path d="M72.3 39.7Q72.7 42.9 70.3 47.4" stroke="#f0f0f0"/><path d="M6.1 32.6Q13.5 33.4 17.4 36.3" stroke="#d0d0d0"/><path d="M64.2 31.7Q60.6 29.2 54.6 29.6" stroke="#f0f0f0"/><path d="M11.0 38.2Q11.8 45.9 13.1 50.6" stroke="#f0f0f0"/><path d="M42.8 51.0Q41.8 56.4 42.4 59.9" stroke="#f0f0f0"/><path d="M47.3 38.7Q45.2 44.7 41.7 47.0" stroke="#d0d0d0"/><path d="M64.4 45.1Q65.5 42.4 66.5 39.2" stroke="#f0f0f0"/><path d="M14.9 39.7Q20.2 37.9 25.3 39.9" stroke="#e0e0e0"/><path d="M67.9 40.3Q65.6 38.7 61.8 40.7" stroke="#e0e0e0"/><path d="M39.9 30.6Q32.4 32.4 27.0 34.2" stroke="#d0d0d0"/><path d="M25.1 66.7Q18.3 68.0 12.9 71.9" stroke="#f0f0f0"/><path d="M45.7 68.5Q39.7 62.7 37.5 59.7" stroke="#e0e0e0"/><path d="M0.9 21.0Q-0.1 25.5 2.1 28.1" stroke="#d0d0d0"/><path d="M9.1 37.8Q10.6 32.5 9.1 31.0" stroke="#f0f0f0"/><path d="M46.8 61.1Q50.7 63.2 54.2 67.6" stroke="#f0f0f0"/><path d="M16.0 40.2Q19.2 41.2 21.3 43.4" stroke="#f0f0f0"/><path d="M13.4 44.6Q12.3 45.3 8.2 48.9" stroke="#e0e0e0"/><path d="M17.7 53.8Q18.1 51.7 18.1 47.9" stroke="#d0d0d0"/><path d="M14.8 46.5Q14.7 50.9 13.1 52.1" stroke="#f0f0f0"/><path d="M71.7 8.5Q79.6 10.1 83.5 9.0" stroke="#f0f0f0"/><path d="M59.4 35.7Q53.6 35.0 47.7 33.9" stroke="#f0f0f0"/><path d="M10.8 13.7Q10.8 6.0 7.3 1.6" stroke="#d0d0d0"/><path d="M4.6 70.4Q9.9 68.7 16.1 67.6" stroke="#d0d0d0"/><path d="M26.2 15.5Q31.4 10.4 33.7 7.9" stroke="#e0e0e0"/><path d="M33.6 54.7Q34.8 54.0 39.2 50.9" stroke="#e0e0e0"/><path d="M24.0 6.3Q22.2 12.0 16.9 17.1" stroke="#f0f0f0"/><path d="M14.1 43.3Q19.0 39.3 20.5 33.3" stroke="#d0d0d0"/></g></svg>
<svg class="th" style="left:173px;top:365px" width="74" height="74"><rect width="74" height="74" fill="#2e2e2e"/><g fill="#6c6c6c" font-family="Liberation Sans" font-size="10" text-anchor="middle" transform="translate(0 1)"><text x="0.0" y="12.0">t</text><text x="3.0" y="9.0">d</text><text x="9.0" y="17.0">m</text><text x="16.0" y="20.0">p</text><text x="22.0" y="13.0">e</text><text x="27.0" y="19.0">y</text><text x="32.0" y="19.0">w</text><text x="38.0" y="11.0">p</text><text x="43.0" y="14.0">x</text><text x="47.0" y="17.0">f</text><text x="51.0" y="10.0">z</text><text x="56.0" y="15.0">u</text><text x="60.0" y="18.0">i</text><text x="63.0" y="16.0">x</text><text x="68.0" y="14.0">m</text><text x="2.5" y="30.0">y</text><text x="6.5" y="34.0">x</text><text x="11.5" y="31.0">r</text><text x="16.0" y="35.5">w</text><text x="22.0" y="28.5">b</text><text x="28.0" y="33.5">p</text><text x="33.7" y="31.7">e</text><text x="38.0" y="34.0">s</text><text x="43.0" y="29.0">c</text><text x="47.0" y="36.0">f</text><text x="49.0" y="34.0">t</text><text x="54.0" y="33.5">o</text><text x="59.0" y="31.7">n</text><text x="65.0" y="35.5">q</text><text x="70.0" y="28.5">u</text><text x="3.0" y="47.5">a</text><text x="8.0" y="45.0">s</text><text x="13.0" y="52.0">d</text><text x="18.0" y="50.0">f</text><text x="21.6" y="49.0">g</text><text x="26.7" y="54.0">h</text><text x="30.5" y="46.0">j</text><text x="34.4" y="51.0">k</text><text x="38.0" y="47.6">l</text><text x="43.0" y="52.0">m</text><text x="49.7" y="54.6">n</text><text x="55.4" y="47.0">b</text><text x="60.5" y="50.0">v</text><text x="65.0" y="54.6">c</text><text x="70.0" y="50.8">x</text><text x="2.5" y="69.0">p</text><text x="7.6" y="73.0">o</text><text x="11.5" y="66.7">i</text><text x="15.3" y="64.0">u</text><text x="20.4" y="70.0">y</text><text x="24.0" y="72.4">t</text><text x="26.7" y="64.8">r</text><text x="30.6" y="71.0">e</text><text x="37.0" y="63.5">w</text><text x="43.3" y="69.0">q</text><text x="48.4" y="70.5">m</text><text x="56.0" y="63.0">h</text><text x="62.4" y="73.0">v</text><text x="66.2" y="66.7">s</text><text x="70.7" y="68.0">z</text></g></svg>
<svg class="th" style="left:253px;top:374px" width="74" height="55"><rect width="74" height="55" filter="url(#fLiege)"/><g fill="#3a3a3a" opacity="0.8"><circle cx="33.6" cy="30.7" r="1.0"/><circle cx="34.5" cy="27.9" r="0.8"/><circle cx="14.3" cy="28.1" r="0.8"/><circle cx="58.1" cy="6.0" r="0.7"/><circle cx="7.5" cy="43.9" r="0.8"/><circle cx="4.0" cy="53.1" r="1.0"/><circle cx="48.1" cy="33.6" r="0.6"/><circle cx="2.1" cy="29.0" r="0.5"/><circle cx="14.7" cy="13.8" r="0.5"/><circle cx="34.4" cy="24.3" r="0.9"/><circle cx="38.4" cy="34.9" r="0.7"/><circle cx="48.7" cy="25.2" r="0.6"/><circle cx="72.8" cy="53.8" r="0.9"/><circle cx="52.0" cy="17.7" r="0.6"/><circle cx="21.8" cy="4.7" r="0.9"/><circle cx="29.8" cy="45.9" r="0.7"/><circle cx="70.0" cy="45.9" r="0.5"/><circle cx="16.1" cy="49.2" r="0.7"/><circle cx="71.6" cy="22.1" r="0.5"/><circle cx="46.3" cy="42.3" r="0.6"/><circle cx="7.3" cy="18.6" r="1.0"/><circle cx="55.6" cy="7.3" r="0.6"/><circle cx="8.3" cy="4.2" r="0.9"/><circle cx="13.8" cy="30.6" r="0.7"/><circle cx="14.7" cy="39.8" r="0.6"/><circle cx="47.3" cy="7.2" r="0.7"/><circle cx="16.3" cy="15.3" r="1.0"/><circle cx="58.8" cy="17.1" r="0.9"/></g></svg>
<div class="a" style="left:333px;top:365px;width:74px;height:74px;background:radial-gradient(circle farthest-corner,#686868 0%,#989898 22%,#c4c4c4 45%,#e0e0e0 66%,#eeeeee 88%) 0 -7.35px/14.7px 14.7px #ececec"></div>
<div class="lb" style="left:10px;top:447.5px">Hachure fi…</div>
<div class="lb" style="left:90px;top:447.5px">Herbe</div>
<div class="lb" style="left:170px;top:447.5px">Lettres</div>
<div class="lb" style="left:250px;top:447.5px">Liège</div>
<div class="lb" style="left:330px;top:447.5px">Mica</div>
<!-- row3 -->
<svg class="th" style="left:13px;top:481px" width="74" height="55">
 <rect width="74" height="55" fill="#c8c8c8"/>
 <rect width="74" height="55" filter="url(#fBrick)" mask="url(#mBrick)"/>
<defs><mask id="mBrick"><rect width="74" height="55" fill="#fff"/><rect x="0" y="-0.4" width="74" height="1.1" fill="#000"/><rect x="9.0" y="-0.4" width="1.1" height="6.8" fill="#000"/><rect x="17.5" y="-0.4" width="1.1" height="6.8" fill="#000"/><rect x="39.0" y="-0.4" width="1.1" height="6.8" fill="#000"/><rect x="61.0" y="-0.4" width="1.1" height="6.8" fill="#000"/><rect x="0" y="6.4" width="74" height="1.1" fill="#000"/><rect x="27.5" y="6.4" width="1.1" height="6.8" fill="#000"/><rect x="49.5" y="6.4" width="1.1" height="6.8" fill="#000"/><rect x="70.5" y="6.4" width="1.1" height="6.8" fill="#000"/><rect x="0" y="13.2" width="74" height="1.1" fill="#000"/><rect x="9.0" y="13.2" width="1.1" height="6.8" fill="#000"/><rect x="17.5" y="13.2" width="1.1" height="6.8" fill="#000"/><rect x="39.0" y="13.2" width="1.1" height="6.8" fill="#000"/><rect x="61.0" y="13.2" width="1.1" height="6.8" fill="#000"/><rect x="0" y="20.0" width="74" height="1.1" fill="#000"/><rect x="27.5" y="20.0" width="1.1" height="6.8" fill="#000"/><rect x="49.5" y="20.0" width="1.1" height="6.8" fill="#000"/><rect x="70.5" y="20.0" width="1.1" height="6.8" fill="#000"/><rect x="0" y="26.8" width="74" height="1.1" fill="#000"/><rect x="9.0" y="26.8" width="1.1" height="6.8" fill="#000"/><rect x="17.5" y="26.8" width="1.1" height="6.8" fill="#000"/><rect x="39.0" y="26.8" width="1.1" height="6.8" fill="#000"/><rect x="61.0" y="26.8" width="1.1" height="6.8" fill="#000"/><rect x="0" y="33.6" width="74" height="1.1" fill="#000"/><rect x="27.5" y="33.6" width="1.1" height="6.8" fill="#000"/><rect x="49.5" y="33.6" width="1.1" height="6.8" fill="#000"/><rect x="70.5" y="33.6" width="1.1" height="6.8" fill="#000"/><rect x="0" y="40.4" width="74" height="1.1" fill="#000"/><rect x="9.0" y="40.4" width="1.1" height="6.8" fill="#000"/><rect x="17.5" y="40.4" width="1.1" height="6.8" fill="#000"/><rect x="39.0" y="40.4" width="1.1" height="6.8" fill="#000"/><rect x="61.0" y="40.4" width="1.1" height="6.8" fill="#000"/><rect x="0" y="47.2" width="74" height="1.1" fill="#000"/><rect x="27.5" y="47.2" width="1.1" height="6.8" fill="#000"/><rect x="49.5" y="47.2" width="1.1" height="6.8" fill="#000"/><rect x="70.5" y="47.2" width="1.1" height="6.8" fill="#000"/><rect x="0" y="54.0" width="74" height="1.1" fill="#000"/><rect x="9.0" y="54.0" width="1.1" height="6.8" fill="#000"/><rect x="17.5" y="54.0" width="1.1" height="6.8" fill="#000"/><rect x="39.0" y="54.0" width="1.1" height="6.8" fill="#000"/><rect x="61.0" y="54.0" width="1.1" height="6.8" fill="#000"/></mask></defs>
</svg>
<svg class="th" style="left:93px;top:472px" width="74" height="74"><defs><filter id="fChiff" x="0" y="0" width="1" height="1" color-interpolation-filters="sRGB">
 <feTurbulence type="turbulence" baseFrequency="0.06" numOctaves="2" seed="3"/>
 <feDiffuseLighting surfaceScale="2.5" diffuseConstant="1.25" lighting-color="#fff"><feDistantLight azimuth="225" elevation="55"/></feDiffuseLighting>
 <feComponentTransfer><feFuncR type="linear" slope="0.55" intercept="0.42"/><feFuncG type="linear" slope="0.55" intercept="0.42"/><feFuncB type="linear" slope="0.55" intercept="0.42"/></feComponentTransfer>
</filter></defs><rect width="74" height="74" filter="url(#fChiff)"/></svg>
<svg class="th" style="left:173px;top:472px" width="74" height="74"><rect width="74" height="74" filter="url(#fPfin)"/></svg>
<div class="a" style="left:250px;top:462px;width:80px;height:107px;border:3px solid #7a7a7a;background:#fff"></div>
<div class="a" style="left:250px;top:553px;width:80px;height:16px;background:#7a7a7a"></div>
<svg class="th" style="left:253px;top:472px" width="74" height="74"><rect width="74" height="74" filter="url(#fPgros)"/></svg>
<svg class="th" style="left:333px;top:472px" width="74" height="74"><rect width="74" height="74" filter="url(#fPreg)"/></svg>
<div class="lb" style="left:10px;top:554.5px">Mur de briq…</div>
<div class="lb" style="left:90px;top:554.5px">Papier chiff…</div>
<div class="lb" style="left:170px;top:554.5px">Papier fin</div>
<div class="lb" style="left:250px;top:554.5px;color:#fff">Papier gros…</div>
<div class="lb" style="left:330px;top:554.5px">Papier rég…</div>
</body></html>
